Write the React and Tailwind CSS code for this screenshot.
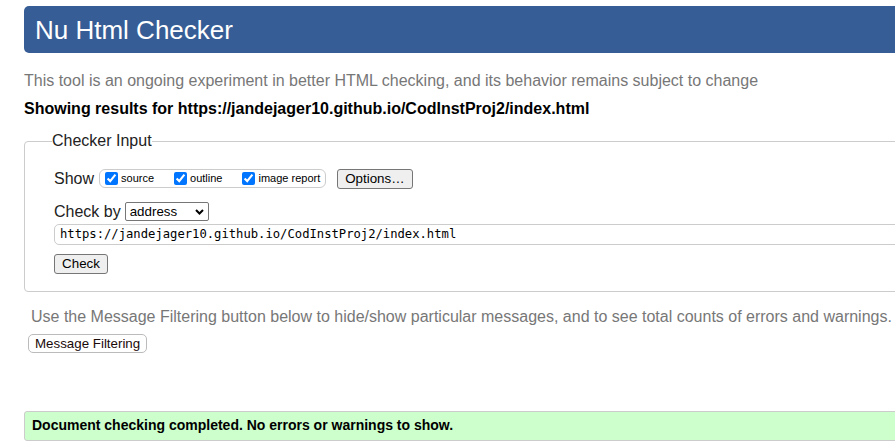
import React from 'react';

const ShowOption = ({ label }) => (
  <label className="flex items-center gap-[3px] text-[11px] leading-[13px] text-black">
    <input type="checkbox" defaultChecked className="w-[13px] h-[13px] m-0 accent-[#0075ff]" />
    <span>{label}</span>
  </label>
);

const App = () => {
  return (
    <div className="w-[895px] h-[442px] overflow-hidden bg-white font-['Liberation_Sans',Arial,sans-serif]">
      <div className="w-[1000px] pl-6 pt-[6px]">
        {/* header */}
        <div className="h-[47px] bg-[#365d95] rounded-l-[5px] flex items-center pl-[11px]">
          <h1 className="text-[26px] leading-[26px] text-white">Nu Html Checker</h1>
        </div>

        <p className="mt-[18px] text-[16px] leading-[20px] text-[#777]">
          This tool is an ongoing experiment in better HTML checking, and its behavior remains subject to change
        </p>
        <p className="mt-[8px] text-[16px] leading-[20px] font-bold text-black">
          Showing results for https://jandejager10.github.io/CodInstProj2/index.html
        </p>

        {/* checker input */}
        <fieldset className="mt-[13px] border border-[#ccc] rounded-[4px] pl-[29px] pt-[18px] pb-[16px]">
          <legend className="-ml-[2px] text-[16px] leading-[18px] text-[#222]">Checker Input</legend>

          <div className="flex items-center h-[21px]">
            <span className="text-[16px] leading-[18px] text-[#222] mr-[5px]">Show</span>
            <div className="flex items-center h-[19px] border border-[#ccc] rounded-[6px] px-[5px] gap-[20px]">
              <ShowOption label="source" />
              <ShowOption label="outline" />
              <ShowOption label="image report" />
            </div>
            <button className="ml-[11px] h-[20px] px-[7px] text-[13.33px] leading-[16px] text-black bg-[#efefef] border border-[#767676] rounded-[3px]">
              Options…
            </button>
          </div>

          <div className="mt-[13px] flex items-center h-[19px]">
            <span className="text-[16px] leading-[18px] text-[#222] mr-[4px]">Check by</span>
            <div className="flex items-center justify-between w-[84px] h-[19px] border border-[#767676] rounded-[2px] pl-[4px] pr-[4px] text-[13.33px] leading-[16px] text-black">
              <span>address</span>
              <svg width="9" height="6" viewBox="0 0 9 6" fill="none">
                <path d="M1 1l3.5 3.5L8 1" stroke="#000" strokeWidth="2" />
              </svg>
            </div>
          </div>

          <div className="mt-[3px] h-[21px] border border-[#ccc] rounded-[5px] flex items-center px-[5px] font-['DejaVu_Sans_Mono',monospace] text-[12.2px] text-black">
            https://jandejager10.github.io/CodInstProj2/index.html
          </div>

          <button className="mt-[9px] h-[20px] w-[54px] text-[13.33px] leading-[16px] text-black bg-[#efefef] border border-[#767676] rounded-[3px]">
            Check
          </button>
        </fieldset>

        <p className="mt-[15px] pl-[7px] text-[16px] leading-[20px] text-[#777]">
          Use the Message Filtering button below to hide/show particular messages, and to see total counts of errors and warnings.
        </p>
        <button className="mt-[7px] ml-[4px] h-[19px] px-[6px] text-[13.33px] leading-[16px] text-[#1a0a0a] bg-white border border-[#bbb] rounded-[5px]">
          Message Filtering
        </button>

        <div className="mt-[56px] h-[30px] bg-[#ccffcc] border border-[#ccc] rounded-l-[3px] flex items-center pl-[7px] text-[14px] font-bold text-black">
          Document checking completed. No errors or warnings to show.
        </div>
      </div>
    </div>
  );
};

export default App;
